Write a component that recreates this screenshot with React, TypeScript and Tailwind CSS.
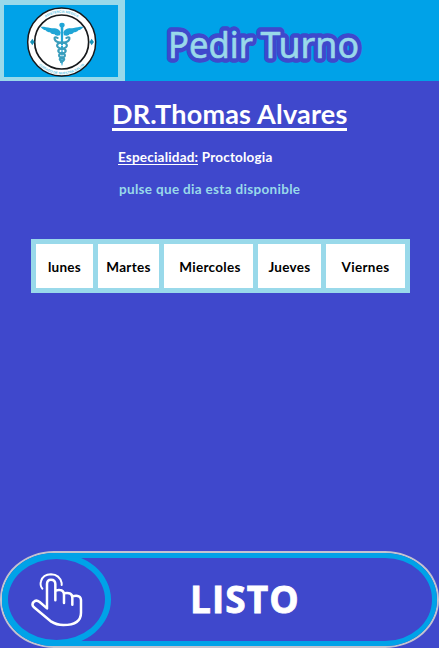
import React from "react";

const days = [
  { name: "lunes", cell: "w-[57px]" },
  { name: "Martes", cell: "w-[61px]" },
  { name: "Miercoles", cell: "w-[89px] pl-[3px]" },
  { name: "Jueves", cell: "w-[63px]" },
  { name: "Viernes", cell: "w-[79px]" },
];

function Caduceus() {
  return (
    <svg viewBox="0 0 216 216" className="h-[72px] w-[72px]" fill="none">
      <circle cx="110" cy="108" r="102" fill="#fff" stroke="#17191c" strokeWidth="4.5" />
      <circle cx="110" cy="108" r="81" stroke="#17191c" strokeWidth="5" />
      <path id="topArc" d="M22 108 A88 88 0 0 1 198 108" />
      <path id="bottomArc" d="M13 108 A97 97 0 0 0 207 108" />
      <g fill="#5fc4e4" fontFamily="Liberation Sans, sans-serif" fontSize="10" fontWeight="700" textAnchor="middle">
        <text><textPath href="#topArc" startOffset="50%">ASISTENCIA MEDICA</textPath></text>
        <text><textPath href="#bottomArc" startOffset="50%">CUIDADO DE NUESTRA SALUD</textPath></text>
      </g>
      <path fill="#1792b8" d="M15 108l4-5 3-5 3 5 4 5-4 5-3 5-3-5zM193 108l4-5 3-5 3 5 4 5-4 5-3 5-3-5z" />
      <g transform="translate(0 6) scale(1 0.9)">
        <g fill="#1fa5d6">
          <path d="M107 82C101 65 88 69 76 67C65 65 57 62 47 63C51 70 57 73 62 74C65 79 70 81 75 81C78 86 83 88 88 87C91 93 98 94 105 91ZM115 82C121 65 134 69 146 67C157 65 165 62 175 63C171 70 165 73 160 74C157 79 152 81 147 81C144 86 139 88 134 87C131 93 124 94 117 91Z" />
          <circle cx="111" cy="57" r="8" />
          <path d="M107 62h8l-2 124-2 8-2-8z" />
        </g>
        <g stroke="#3a9dbc" strokeWidth="6.5" strokeLinecap="round">
          <path d="M98 100C83 90 86 115 107 115C130 115 132 133 112 135C96 137 96 149 111 151C123 153 122 164 111 166C101 169 103 175 112 178" />
          <path d="M124 100C139 90 136 115 115 115C92 115 90 133 110 135C126 137 126 149 111 151C99 153 100 164 111 166C121 169 119 175 108 180" />
        </g>
        <path d="M104 101v8M118 101v8M102 125h17M105 143h12M107 159h8" stroke="#fff" strokeWidth="2" />
      </g>
    </svg>
  );
}

function TapHand() {
  return (
    <svg viewBox="90 80 160 165" className="h-[55px] w-[53.33px]" fill="none" stroke="#fff" strokeWidth="7.5" strokeLinecap="round" strokeLinejoin="round">
      <path d="M141 189V116Q141 103 153 103Q166 103 166 116V165M166 138Q170 133 179 134Q192 135 192 148V173M192 144Q217 139 217 158V178M217 153Q243 147 243 165V202C243 228 222 239 190 239Q169 239 154 229L101 185Q94 177 101 170Q108 162 119 170L141 189" />
      <path d="M127 130Q119 120 123 108Q129 87 153 87Q179 88 185 113V119" strokeWidth="6" />
    </svg>
  );
}

function TitleWords() {
  return (
    <>
      <tspan x="8" textLength="85" lengthAdjust="spacingAndGlyphs">Pedir</tspan>
      <tspan x="100.5" textLength="98.5" lengthAdjust="spacingAndGlyphs">Turno</tspan>
    </>
  );
}

export default function App() {
  return (
    <main className="flex h-[648px] w-[439px] flex-col overflow-hidden bg-[#3f48cc] font-['Lato','Liberation_Sans',sans-serif] font-bold">
      <header className="flex h-[81px] shrink-0 bg-[#00a2e8]">
        <div className="flex w-[125px] justify-center border-t-[5px] border-r-[7px] border-b-4 border-l-4 border-[#99d9ea] pt-px pr-px">
          <Caduceus />
        </div>
        <h1 className="pt-[15px] pl-[35px]">
          <svg viewBox="0 0 210 60" className="h-[60px] w-[210px] overflow-visible" fontFamily="Noto Sans, sans-serif" fontSize="37" fontWeight="400" strokeLinejoin="round">
            <text y="42.5" fill="#3f48cc" stroke="#3f48cc" strokeWidth="9.5" aria-hidden="true">
              <TitleWords />
            </text>
            <text y="42.5" fill="#99d9ea" stroke="#99d9ea" strokeWidth="0.6">
              <TitleWords />
            </text>
          </svg>
        </h1>
      </header>

      <section className="flex flex-col items-start whitespace-nowrap pl-[112px] text-white">
        <h2 className="mt-[18px] h-8 border-b-[3px] border-white text-[27px] leading-[29px] tracking-[0.2px]">DR.Thomas Alvares</h2>
        <p className="mt-[17px] ml-1.5 text-[13.5px] leading-[18px] tracking-[0.2px]">
          <span className="inline-block h-[17px] border-b border-white">Especialidad:</span> Proctologia
        </p>
        <p className="mt-3.5 ml-[7px] text-[13.5px] leading-[18px] tracking-[0.32px] text-[#99d9ea]">pulse que dia esta disponible</p>
      </section>

      <section className="mt-[41px] ml-[31px] flex h-[54px] w-[379px] gap-[5px] bg-[#99d9ea] p-[5px] text-[13.5px] tracking-[0.3px] text-black">
        {days.map((day) => (
          <button key={day.name} className={`flex grow items-center justify-center bg-white pt-0.5 ${day.cell}`}>
            {day.name}
          </button>
        ))}
      </section>

      <button className="mt-auto h-[97px] w-full rounded-[54px/48px] border-2 border-[#c3c3cf] text-white">
        <span className="flex h-full w-full items-center rounded-[52px/46px] border-[5px] border-[#00a2e8]">
          <span className="-my-[5px] -ml-[5px] flex h-[93px] w-[109px] shrink-0 items-center justify-center rounded-[50%] border-[6px] border-[#00a2e8]">
            <TapHand />
          </span>
          <span className="ml-[79px] pb-[2px] text-[37px] leading-none font-bold tracking-[1.1px] font-['Open_Sans',sans-serif] [-webkit-text-stroke:0.8px_white]">LISTO</span>
        </span>
      </button>
    </main>
  );
}
